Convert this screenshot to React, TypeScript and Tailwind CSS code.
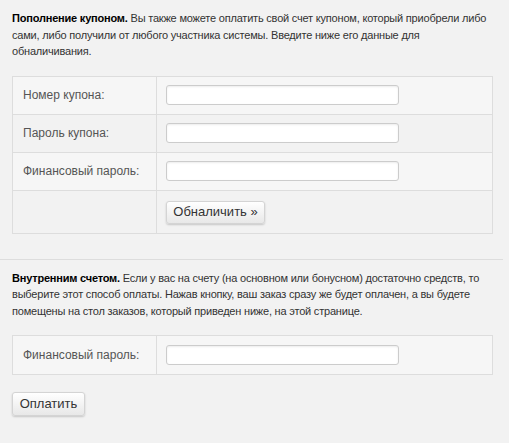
import React from "react";

const font = { fontFamily: '"Liberation Sans", Arial, sans-serif' };

const inp =
  "h-[20px] w-[233px] rounded-[3px] border border-[#cccccc] bg-white px-1 text-[12px] shadow-[inset_0_1px_2px_rgba(0,0,0,0.08)] outline-none";

const btn =
  "rounded-[3px] border border-[#d4d4d4] bg-gradient-to-b from-white to-[#e8e8e8] text-[13px] text-[#333] shadow-[0_1px_2px_rgba(0,0,0,0.18)]";

const lblCell = "w-[144px] border-r border-[#dddddd] pl-[10px] text-[12px] text-[#555]";

const para = "text-[11px] leading-[16.5px] tracking-[-0.2px] text-[#333] whitespace-nowrap";

function Row({ label, striped, last }: { label: string; striped?: boolean; last?: boolean }) {
  return (
    <div className={`flex h-[38px] ${striped ? "bg-[#f6f6f6]" : ""} ${last ? "" : "border-b border-[#dddddd]"}`}>
      <div className={`${lblCell} flex items-center`}>{label}</div>
      <div className="flex items-center pl-[9px]">
        <input type="text" className={inp} />
      </div>
    </div>
  );
}

export default function App() {
  return (
    <div className="min-h-[443px] w-[509px] bg-[#f2f2f2]" style={font}>
      <div className="w-[503px]">
        <div className="pl-[12px] pr-[10px] pt-[10px]">
          <p className={para}>
            <b className="text-black">Пополнение купоном.</b> Вы также можете оплатить свой счет купоном, который приобрели либо
            <br />
            сами, либо получили от любого участника системы. Введите ниже его данные для
            <br />
            обналичивания.
          </p>

          <div className="mt-[16px] border border-[#dddddd]">
            <Row label="Номер купона:" striped />
            <Row label="Пароль купона:" />
            <Row label="Финансовый пароль:" striped />
            <div className="flex h-[42px]">
              <div className={lblCell} />
              <div className="flex items-start pl-[9px] pt-[10px]">
                <button className={`${btn} h-[23px] w-[99px]`}>Обналичить »</button>
              </div>
            </div>
          </div>
        </div>

        <div className="mt-[25px] border-t border-[#dddddd]" />

        <div className="pl-[12px] pr-[10px] pt-[10px]">
          <p className={para}>
            <b className="text-black">Внутренним счетом.</b> Если у вас на счету (на основном или бонусном) достаточно средств, то
            <br />
            выберите этот способ оплаты. Нажав кнопку, ваш заказ сразу же будет оплачен, а вы будете
            <br />
            помещены на стол заказов, который приведен ниже, на этой странице.
          </p>

          <div className="mt-[16px] border border-[#dddddd]">
            <Row label="Финансовый пароль:" striped last />
          </div>

          <button className={`${btn} mt-[17px] h-[24px] w-[73px]`}>Оплатить</button>
        </div>
      </div>
    </div>
  );
}
